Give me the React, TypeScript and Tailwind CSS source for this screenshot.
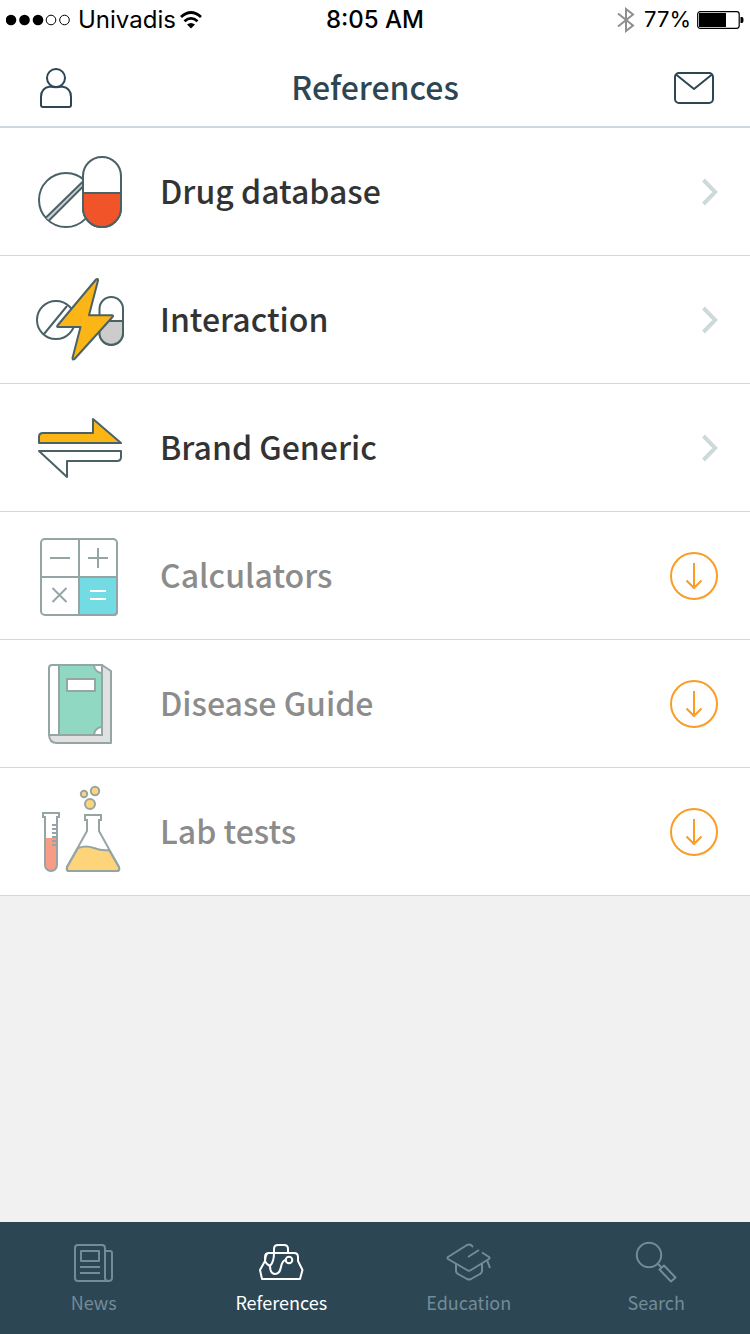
import type { ReactNode } from "react";

type Reference = {
  name: string;
  icon: ReactNode;
  installed: boolean;
};

type Tab = {
  name: string;
  icon: ReactNode;
};

const DrugIcon = () => (
  <g stroke="#4a6266" strokeWidth="2" fill="#fff">
    <circle cx="34" cy="56" r="27" />
    <path d="M14 74L52 37V41L17 76Z" fill="#cfcfd4" stroke="none" />
    <path d="M14 73.500L52 36.500M17 76.500L52 41.500" />
    <rect x="51" y="13" width="38" height="70" rx="19" />
    <path d="M51 49H89V64a19 19 0 0 1-38 0Z" fill="#f15428" />
  </g>
);

const InteractionIcon = () => (
  <g stroke="#4a6266" strokeWidth="2" fill="#fff" strokeLinejoin="round">
    <circle cx="24" cy="48" r="19" />
    <path d="M12 62L35 34M30 49L41 36" />
    <rect x="67.500" y="25" width="23.500" height="48" rx="11.700" />
    <path d="M67.500 49H91V61a11.700 11.700 0 0 1-23.500 0Z" fill="#ccc" />
    <path
      d="M64 7.500L25.500 53.500Q24.500 55 26 55H48.500L40.500 86Q40.500 88.500 42.500 87L80.500 45Q82 43.500 80 43.300H57L66 8.500Q66 6 64 7.500Z"
      fill="#fbb615"
    />
  </g>
);

const BrandIcon = () => (
  <g stroke="#4a6266" strokeWidth="2" fill="#fff">
    <path d="M7 43V37Q7 33 11 33H61V19L89 43Z" fill="#fbb615" strokeLinejoin="round" />
    <path d="M7 51H89V57Q89 61 85 61H35V77Z" strokeLinejoin="round" />
  </g>
);

const CalculatorIcon = () => (
  <g stroke="#95a5a6" strokeWidth="2" fill="none">
    <path d="M47 49H85V84Q85 87 82 87H47Z" fill="#72dbe3" />
    <rect x="9" y="11" width="76" height="76" rx="4" />
    <path d="M47 11V87M9 49H85" />
    <path d="M18 30H38M56 30H76M66 20V40M20.500 60L34.500 74M34.500 60L20.500 74" />
    <path d="M58 63H74M58 71H74" stroke="#fff" />
  </g>
);

const BookIcon = () => (
  <g stroke="#95a5a6" strokeWidth="2" fill="#fff" strokeLinejoin="round">
    <path d="M17 78Q17 87 25 87H79V15L70 9V79Z" fill="#e1e1e1" />
    <path d="M70 9H20Q17 9 17 12V79H70Z" />
    <path d="M27 9H70V79H27Z" fill="#90d8c2" />
    <path d="M62 9A8 8 0 0 0 70 17V9ZM62 79A8 8 0 0 1 70 71V79Z" />
    <rect x="35" y="23" width="28" height="12" />
  </g>
);

const LabIcon = () => (
  <g stroke="#95a5a6" strokeWidth="2" fill="#fff">
    <path d="M13 54H25V81a6 6 0 0 1-12 0Z" fill="#f79c85" stroke="none" />
    <path d="M11 29H27V33H25V81a6 6 0 0 1-12 0V33H11Z" fill="none" />
    <path d="M20 41H25M20 45H25M20 49H25M20 53H25M20 57H25M20 61H25" />
    <path
      d="M46 64Q54 61 62 64T77 66L87 83Q88 87 85 87H37Q34 87 35 83Z"
      fill="#fdd47a"
    />
    <path d="M53 31H69V36H67V47L87 83Q88 87 85 87H37Q34 87 35 83L55 47V36H53Z" fill="none" />
    <g fill="#fdd47a">
      <circle cx="52" cy="10" r="3.200" />
      <circle cx="63" cy="7" r="4.200" />
      <circle cx="58" cy="20" r="5" />
    </g>
  </g>
);

const references: Reference[] = [
  { name: "Drug database", icon: <DrugIcon />, installed: true },
  { name: "Interaction", icon: <InteractionIcon />, installed: true },
  { name: "Brand Generic", icon: <BrandIcon />, installed: true },
  { name: "Calculators", icon: <CalculatorIcon />, installed: false },
  { name: "Disease Guide", icon: <BookIcon />, installed: false },
  { name: "Lab tests", icon: <LabIcon />, installed: false },
];

const tabs: Tab[] = [
  {
    name: "News",
    icon: (
      <>
        <path d="M38 43H8Q5 43 5 40V10Q5 7 8 7H32Q35 7 35 10V40Q35 43 38.500 43T42 40V15Q42 13 40 13H35" />
        <path d="M11 13H29V23H11ZM10 29H30M10 35H30" />
      </>
    ),
  },
  {
    name: "References",
    icon: (
      <>
        <path d="M5 41H43L45.500 32L41 23V19Q41 15 37 15H12Q8 15 8 19V23L3 32Z" />
        <path d="M17 15V11Q17 7 21 7H27Q31 7 31 11V15" />
        <path d="M10 15.500Q8 19 8 23Q9 26 13 28Q17 24 17 15M13 28Q13 36 18.500 36C26 36 22 23 28.500 22" />
        <circle cx="32" cy="22" r="3.300" />
      </>
    ),
  },
  {
    name: "Education",
    icon: (
      <>
        <path d="M28 9L26 7Q24 6 22 7L3 19Q2 20 3 21L22 32Q24 33.500 26 32L44 21Q45 20 44 19L37 14.500" />
        <path d="M23 19L34 12M11 26V33Q11 35 13 36L22 41Q24 42 26 41L35 36Q37 35 37 33V26M42 22L45 30" />
      </>
    ),
  },
  {
    name: "Search",
    icon: (
      <>
        <circle cx="17" cy="17" r="12.200" />
        <path d="M26 26L29.500 29.500M27.500 31.500L32 27.500L43.500 39.500L39 43.500Z" />
      </>
    ),
  },
];

const StatusBar = () => (
  <div className="grid h-10 grid-cols-3 items-center px-1.5 font-['Inter',sans-serif] text-2xl text-black">
    <div className="flex items-center gap-2">
      <svg width="64" height="12" viewBox="0 0 64 12" aria-hidden="true">
        <circle cx="5" cy="6" r="5.300" />
        <circle cx="18.500" cy="6" r="5.300" />
        <circle cx="32" cy="6" r="5.300" />
        <circle cx="45" cy="6" r="4.800" fill="none" stroke="#000" />
        <circle cx="58.500" cy="6" r="4.800" fill="none" stroke="#000" />
      </svg>
      <div className="flex items-center gap-1">
        <span>Univadis</span>
        <svg width="22" height="18" viewBox="0 0 22 18" fill="none" stroke="#000" strokeWidth="2.800" aria-hidden="true">
          <path d="M1 6Q11 -3 21 6M4.500 10.200Q11 4.500 17.500 10.200" />
          <path d="M11 17.500L7 13.500Q11 10.500 15 13.500Z" fill="#000" stroke="none" />
        </svg>
      </div>
    </div>
    <span className="text-center font-medium">8:05 AM</span>
    <div className="flex items-center justify-end gap-1.5">
      <svg width="22" height="26" viewBox="0 0 22 26" fill="none" stroke="#8e8e8e" strokeWidth="2" aria-hidden="true">
        <path d="M2 6.500L17 18.500L10 24V2L17 7.500L2 19.500" />
      </svg>
      <span className="text-[22px]">77%</span>
      <svg width="47" height="18" viewBox="0 0 47 18" aria-hidden="true">
        <rect x="0.700" y="0.700" width="41.500" height="16.600" rx="2.500" fill="none" stroke="#000" strokeWidth="1.200" />
        <path d="M2 2H29V16H2ZM43.500 6H45Q46.500 6 46.500 9T45 12H43.500Z" />
      </svg>
    </div>
  </div>
);

const Header = () => (
  <header className="flex h-22 items-center justify-between border-b-2 border-[#cfd8dc] px-9 pt-2.5 text-[#2c4654]">
    <button type="button" aria-label="Profile">
      <svg width="40" height="40" viewBox="0 0 40 40" fill="none" stroke="currentColor" strokeWidth="2">
        <circle cx="20" cy="10" r="9" />
        <path d="M14 18.500Q5 20 5 29V37Q5 39 7 39H33Q35 39 35 37V29Q35 20 26 18.500Q20 20 14 18.500" />
      </svg>
    </button>
    <h1 className="pb-1 text-[32px] font-medium">References</h1>
    <button type="button" aria-label="Messages">
      <svg width="40" height="40" viewBox="0 0 40 40" fill="none" stroke="currentColor" strokeWidth="2">
        <rect x="1" y="5" width="38" height="30" rx="4" />
        <path d="M2 6.500L20 21L38 6.500" strokeLinejoin="round" />
      </svg>
    </button>
  </header>
);

const ReferenceRow = ({ name, icon, installed }: Reference) => {
  const label = (
    <>
      <svg width="96" height="96" viewBox="0 0 96 96" className="shrink-0" aria-hidden="true">
        {icon}
      </svg>
      <span className="grow pb-1 text-[32px]">{name}</span>
    </>
  );

  return (
    <li className="border-b border-[#cfd8dc] bg-white font-medium">
      {installed ? (
        <a href="#" className="flex items-center gap-8 px-8 pt-4 pb-[15px] text-[#333]">
          {label}
          <svg width="16" height="28" viewBox="0 0 16 28" fill="none" stroke="#cfd8dc" strokeWidth="4" aria-hidden="true">
            <path d="M1.500 2L13.200 14L1.500 26" />
          </svg>
        </a>
      ) : (
        <div className="flex items-center gap-8 px-8 pt-4 pb-[15px] text-[#8c8c8c]">
          {label}
          <button type="button" aria-label={`Download ${name}`}>
            <svg width="48" height="48" viewBox="0 0 48 48" fill="none" stroke="#fa9c26" strokeWidth="2">
              <circle cx="24" cy="24" r="23" />
              <path d="M24 11V36M16.500 28.500L24 36L31.500 28.500" />
            </svg>
          </button>
        </div>
      )}
    </li>
  );
};

const TabBar = ({ active }: { active: string }) => (
  <nav className="grid h-28 grid-cols-4 bg-[#2c4654]">
    {tabs.map(({ name, icon }) => (
      <a
        key={name}
        href="#"
        className={`flex flex-col items-center gap-1 pt-4 ${name === active ? "text-white" : "text-[#728c98]"}`}
      >
        <svg
          width="48"
          height="48"
          viewBox="0 0 48 48"
          fill="none"
          stroke="currentColor"
          strokeWidth="2"
          strokeLinejoin="round"
          aria-hidden="true"
        >
          {icon}
        </svg>
        <span className="text-lg leading-6">{name}</span>
      </a>
    ))}
  </nav>
);

const App = () => {
  return (
    <div className="flex min-h-screen flex-col bg-[#f1f1f1] font-['Noto_Sans_CJK_SC',sans-serif]">
      <div className="bg-white">
        <StatusBar />
        <Header />
      </div>
      <main className="grow">
        <ul>
          {references.map((reference) => (
            <ReferenceRow key={reference.name} {...reference} />
          ))}
        </ul>
      </main>
      <TabBar active="References" />
    </div>
  );
};

export default App;
